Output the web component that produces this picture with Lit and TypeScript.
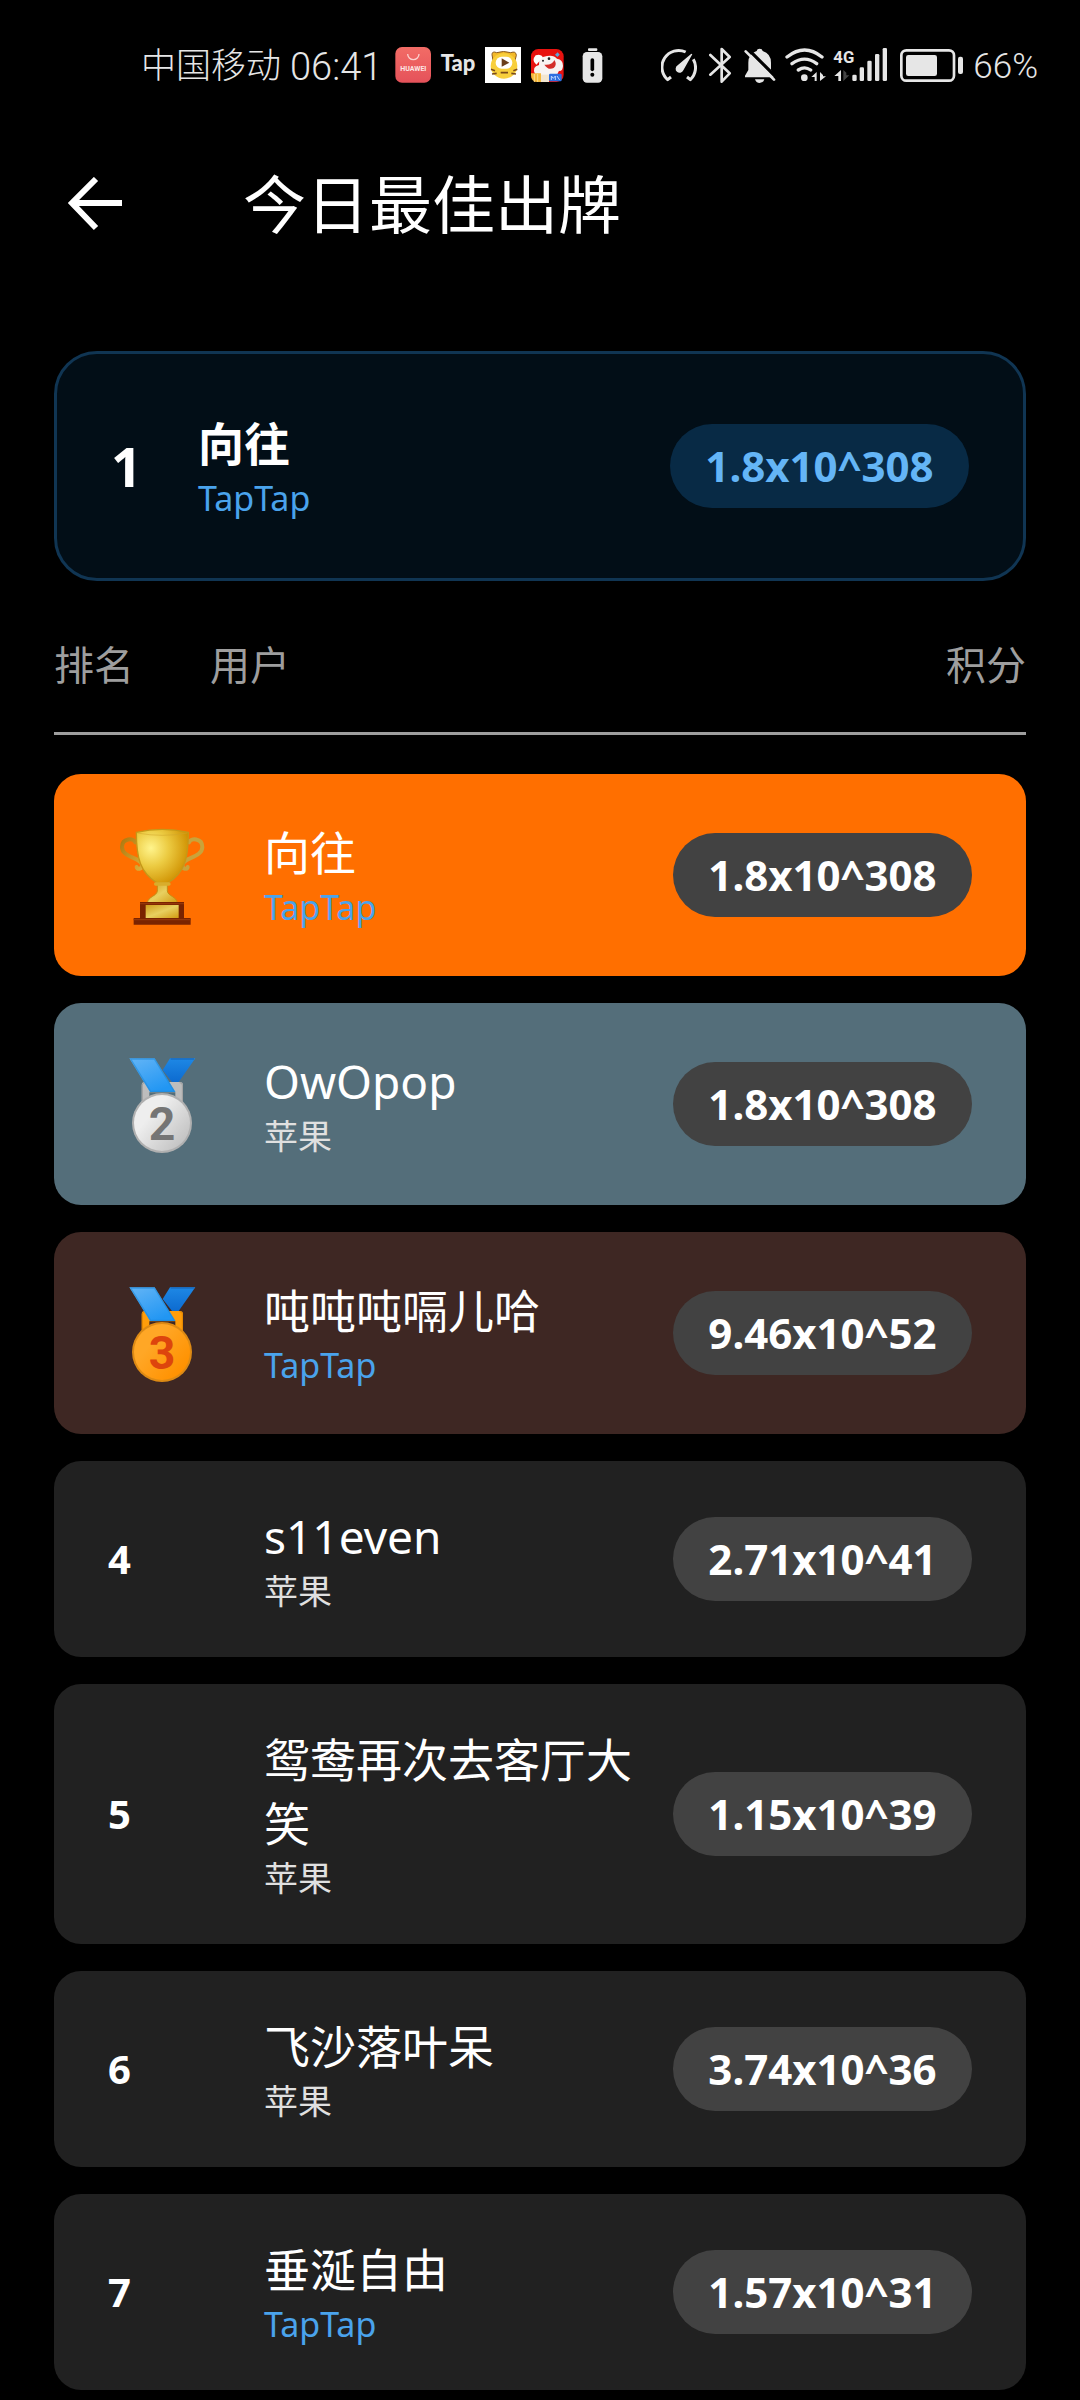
import { LitElement, html, svg, css } from "lit";
import { customElement, property } from "lit/decorators.js";

type Platform = "TapTap" | "苹果";

interface Entry {
  rank: number;
  name: string;
  platform: Platform;
  score: string;
}

const ENTRIES: Entry[] = [
  { rank: 1, name: "向往", platform: "TapTap", score: "1.8x10^308" },
  { rank: 2, name: "OwOpop", platform: "苹果", score: "1.8x10^308" },
  { rank: 3, name: "吨吨吨嗝儿哈", platform: "TapTap", score: "9.46x10^52" },
  { rank: 4, name: "s11even", platform: "苹果", score: "2.71x10^41" },
  { rank: 5, name: "鸳鸯再次去客厅大笑", platform: "苹果", score: "1.15x10^39" },
  { rank: 6, name: "飞沙落叶呆", platform: "苹果", score: "3.74x10^36" },
  { rank: 7, name: "垂涎自由", platform: "TapTap", score: "1.57x10^31" },
];

@customElement("status-bar")
class StatusBar extends LitElement {
  static styles = css`
    :host {
      display: flex;
      justify-content: space-between;
      align-items: center;
      height: 130px;
      padding: 0 42px 0 141px;
      color: #e6e6e6;
      font: 300 35px/48px "Roboto", "Noto Sans CJK SC", sans-serif;
      white-space: nowrap;
    }
    .group {
      display: flex;
      align-items: center;
      gap: 9px;
    }
    .tight {
      gap: 5px;
    }
    span {
      padding-top: 4px;
    }
    .time {
      font-size: 38px;
      min-width: 96px;
    }
    svg {
      display: block;
      height: 36px;
    }
  `;

  render() {
    return html`
      <div class="group">
        <span>中国移动</span>
        <span class="time">06:41</span>
        <svg width="36" viewBox="825 51 108 108" aria-hidden="true">
          <defs>
            <linearGradient id="store" x1="0" y1="0" x2="0" y2="1">
              <stop offset="0" stop-color="#f26c66" />
              <stop offset="1" stop-color="#e5525a" />
            </linearGradient>
          </defs>
          <rect x="826" y="51" width="107" height="107" rx="20" fill="url(#store)" />
          <path d="M863 72a17 17 0 0 0 34 0" fill="none" stroke="#fbd0cc" stroke-width="4" />
          <text x="880" y="122" text-anchor="middle" font-size="21" font-weight="700" fill="#fde6e4">HUAWEI</text>
        </svg>
        <svg width="36" viewBox="960 51 108 108" aria-hidden="true">
          <text x="1014" y="123" text-anchor="middle" font-family="Lato, sans-serif" font-size="66" font-weight="900" fill="#e6e6e6">Tap</text>
        </svg>
        <svg width="36" viewBox="1095 51 108 108" aria-hidden="true">
          <rect x="1095" y="51" width="108" height="108" fill="#fff" />
          <path d="M1116 74q0-12 14-6q20-7 42 0q16-6 17 8l-4 16h-66z" fill="#f3b928" stroke="#8a5a20" stroke-width="3" />
          <ellipse cx="1152" cy="108" rx="40" ry="38" fill="#f8cf3c" />
          <path d="M1113 118l12 4M1116 132l14-2M1192 118l-12 4M1188 132l-14-2M1142 128h22" stroke="#7a4a1a" stroke-width="5" />
          <rect x="1127" y="80" width="50" height="36" rx="18" fill="#fff" />
          <path d="M1145 85l23 13-23 12z" fill="#6b3f1c" />
        </svg>
        <svg width="36" viewBox="1233 51 108 108" aria-hidden="true">
          <rect x="1236" y="57" width="98" height="99" rx="22" fill="#e8120f" />
          <path d="M1248 132q-10-22 12-27q-4-24 24-27q20-4 30 8q18 2 18 22q-2 18-12 14q-6 20-30 20q-14 8-42-10z" fill="#f8f4f2" />
          <path d="M1252 104q-16-12-2-28q16-6 22 6z" fill="#fff" />
          <path d="M1276 104q24 2 30-14q10 14-2 24q-16 8-28-10z" fill="#d32f2a" />
          <circle cx="1290" cy="86" r="4" fill="#222" />
          <circle cx="1272" cy="92" r="3" fill="#222" />
          <path d="M1308 74l8-7 6 7-7 7z" fill="#5da5d8" />
          <path d="M1236 130h30v26h-10q-20 0-20-22z" fill="#f6b93b" />
          <path d="M1266 134h24v22h-24z" fill="#f3e6cf" />
          <path d="M1246 132v24M1256 132v24" stroke="#fbdc8c" stroke-width="3" />
          <rect x="1290" y="131" width="38" height="23" rx="4" fill="#2f6fe0" />
          <path d="M1297 150v-12l6 7 6-7v12M1314 138l8 12" stroke="#bcd7ff" stroke-width="3" fill="none" />
        </svg>
        <svg width="36" viewBox="1368 51 108 108" aria-hidden="true">
          <rect x="1407" y="55" width="28" height="8" rx="3" fill="#e6e6e6" />
          <rect x="1391" y="66" width="59" height="92" rx="13" fill="#e6e6e6" />
          <path d="M1420 90v28" stroke="#000" stroke-width="11" stroke-linecap="round" />
          <circle cx="1420" cy="134" r="6" />
        </svg>
      </div>
      <div class="group tight">
        <svg width="36" viewBox="60 51 108 108" fill="none" stroke="#e6e6e6" stroke-width="9" aria-hidden="true">
          <path d="M90 141l-10 8A50 50 0 0 1 134 66" stroke-linejoin="round" />
          <path d="M157 88A50 50 0 0 1 148 149l-10-8" stroke-linejoin="round" />
          <path d="M151 71l3 2-27 48a12 12 0 1 1-17-15z" fill="#e6e6e6" stroke="none" />
        </svg>
        <svg width="36" viewBox="183 51 108 108" fill="none" stroke="#e6e6e6" stroke-width="8" stroke-linecap="round" stroke-linejoin="round" aria-hidden="true">
          <path d="M208 75l58 55-24 25V57l24 24-58 53" />
        </svg>
        <svg width="36" viewBox="306 51 108 108" aria-hidden="true">
          <path d="M347 63q1-7 9-7q8 0 9 7q25 8 25 35v22l10 17v5h-88v-5l10-17V98q0-27 25-35z" fill="#e6e6e6" />
          <path d="M342 148h28q-3 11-14 11t-14-11z" fill="#e6e6e6" />
          <path d="M322 58l86 86" stroke="#000" stroke-width="10" />
          <path d="M314 64l85 85" stroke="#e6e6e6" stroke-width="8" stroke-linecap="round" />
        </svg>
        <svg width="43" viewBox="429 51 129 108" fill="none" stroke="#e6e6e6" stroke-width="10" stroke-linecap="round" aria-hidden="true">
          <path d="M438 81q53-42 105 0M453 101q38-27 74 0M472 120q19-13 37 0" />
          <circle cx="490" cy="143" r="10" fill="#e6e6e6" stroke="none" />
          <path d="M511 141l16-15v27h-6v-12zM555 139h-9v-4l-9-9v27z" fill="#e6e6e6" stroke="none" />
        </svg>
        <svg width="58" viewBox="573 51 174 108" fill="#e6e6e6" aria-hidden="true">
          <text x="577" y="98" font-size="50" font-weight="700">4G</text>
          <path d="M580 138l20-18v33h-8v-15z" />
          <path d="M607 120v33l18-17h-9v-8z" fill="#444" />
          <rect x="634" y="134" width="13" height="19" rx="4" />
          <rect x="656" y="112" width="13" height="41" rx="4" />
          <rect x="679" y="92" width="13" height="61" rx="4" />
          <rect x="702" y="72" width="13" height="81" rx="4" />
          <rect x="725" y="54" width="13" height="99" rx="4" />
        </svg>
        <svg width="73" viewBox="762 51 219 108" fill="#e6e6e6" aria-hidden="true">
          <rect x="781" y="61" width="158" height="91" rx="15" fill="none" stroke="#e6e6e6" stroke-width="8" />
          <rect x="795" y="75" width="93" height="63" rx="7" />
          <rect x="951" y="80" width="15" height="52" rx="6" />
        </svg>
        <span>66%</span>
      </div>
    `;
  }
}

@customElement("rank-award")
class RankAward extends LitElement {
  @property({ type: Number }) rank = 1;

  static styles = css`
    :host {
      display: block;
      width: 108px;
    }
    svg {
      display: block;
      width: 108px;
      height: 116px;
    }
    text {
      font: 700 139px "Roboto", sans-serif;
    }
  `;

  private trophy() {
    return svg`
      <defs>
        <radialGradient id="cup" cx="0.28" cy="0.35" r="0.75">
          <stop offset="0" stop-color="#fff48c" />
          <stop offset="0.45" stop-color="#eccb42" />
          <stop offset="1" stop-color="#cf9000" />
        </radialGradient>
        <linearGradient id="arm" x1="0" y1="0" x2="1" y2="1">
          <stop offset="0" stop-color="#b07a10" />
          <stop offset="1" stop-color="#dcae38" />
        </linearGradient>
        <linearGradient id="plate" x1="0" y1="0" x2="1" y2="1">
          <stop offset="0" stop-color="#cf9d1a" />
          <stop offset="0.5" stop-color="#e8d060" />
          <stop offset="1" stop-color="#d29a10" />
        </linearGradient>
      </defs>
      <path d="M286 664c-4-14-40-14-40 14c0 32 58 32 60 54c0 14-14 14-16 6" fill="none" stroke="url(#arm)" stroke-width="12" stroke-linecap="round" />
      <path d="M447 664c4-14 40-14 40 14c0 32-58 32-60 54c0 14 14 14 16 6" fill="none" stroke="#c9a33a" stroke-width="12" stroke-linecap="round" />
      <path d="M352 784h30v26c2 16 28 16 30 36h-90c2-20 28-20 30-36z" fill="url(#plate)" stroke="#c58f14" stroke-width="3" />
      <path d="M289 634q78-18 156 0c0 78-10 120-62 152h-32c-50-32-62-74-62-152z" fill="url(#cup)" stroke="#c59818" stroke-width="4" />
      <path d="M292 636q75 14 150 0" fill="none" stroke="#cfa32a" stroke-width="3" opacity="0.5" />
      <rect x="342" y="784" width="50" height="10" rx="5" fill="#d9ad2c" />
      <path d="M300 843h132v48h20v20H281v-20h19z" fill="#7a2300" />
      <path d="M281 894h171v4H281zM300 846h132v4H300z" fill="#94360a" />
      <rect x="317" y="852" width="99" height="39" fill="url(#plate)" />
    `;
  }

  private medal() {
    const silver = this.rank === 2;
    return svg`
      <defs>
        <linearGradient id="band" x1="0" y1="0" x2="0.6" y2="1">
          <stop offset="0" stop-color="#64b5f6" />
          <stop offset="1" stop-color="#2196f3" />
        </linearGradient>
        <linearGradient id="back" x1="0" y1="0" x2="0" y2="1">
          <stop offset="0" stop-color="#1e88e5" />
          <stop offset="1" stop-color="#0d6bd0" />
        </linearGradient>
        <linearGradient id="disc" x1="0.1" y1="0.1" x2="0.9" y2="0.8">
          <stop offset="0.3" stop-color=${silver ? "#eeeeee" : "#ffa726"} />
          <stop offset="1" stop-color=${silver ? "#c4c4c4" : "#ff9100"} />
        </linearGradient>
      </defs>
      <path d="M305 340v-58q0-9 9-9h106q9 0 9 9v58h-23v-36h-78v36z" fill=${silver ? "#bdbdbd" : "#ff9d0a"} />
      <path d="M307 336v-54q0-7 8-7M427 336v-54q0-7-8-7" fill="none" stroke=${silver ? "#9e9e9e" : "#e08600"} stroke-width="3" />
      <path d="M390 202h76l-50 71h-20l-28-36z" fill="url(#back)" />
      <path d="M392 204h70" stroke="#1769c0" stroke-width="4" />
      <path d="M268 202h76l62 101h-76z" fill="url(#band)" />
      <path d="M272 204h71l60 97h-71z" fill="none" stroke="#1e88d8" stroke-width="4" opacity="0.6" />
      <circle cx="366" cy="396" r="90" fill=${silver ? "#b0b0b0" : "#dd8a14"} />
      <circle cx="366" cy="396" r="84" fill="url(#disc)" />
      <text x="366" y="446" text-anchor="middle" fill=${silver ? "#757575" : "#dd450d"}>${this.rank}</text>
    `;
  }

  render() {
    return this.rank === 1
      ? html`<svg viewBox="204 588 324 348" role="img" aria-label="1">${this.trophy()}</svg>`
      : html`<svg viewBox="204 165 324 348" role="img">${this.medal()}</svg>`;
  }
}

@customElement("app-root")
class AppRoot extends LitElement {
  static styles = css`
    :host {
      display: block;
      box-sizing: border-box;
      min-height: 100vh;
      background: #000;
      color: #fff;
      font-family: "Noto Sans", "Noto Sans CJK SC", sans-serif;
    }
    .app-bar {
      display: flex;
      align-items: center;
      gap: 108px;
      height: 148px;
      padding: 0 54px;
    }
    .back {
      display: flex;
      align-items: center;
      justify-content: center;
      width: 81px;
      height: 81px;
      padding: 0;
      border: 0;
      background: none;
      color: #fff;
    }
    h1 {
      margin: 0;
      font-size: 63px;
      line-height: 84px;
      font-weight: 400;
    }
    main {
      padding: 73px 54px 8px;
    }
    .mine {
      display: grid;
      grid-template-columns: 87px 1fr auto;
      align-items: center;
      padding: 57px 54px;
      border: 3px solid #103553;
      border-radius: 43px;
      background: #020e17;
    }
    .mine .rank {
      font-size: 54px;
    }
    .mine .name {
      font-weight: 700;
    }
    .mine .score {
      background: #082a45;
      color: #64b5f6;
    }
    table,
    thead,
    tbody {
      display: block;
    }
    tr {
      display: grid;
      grid-template-columns: 156px 1fr auto;
      align-items: center;
    }
    th,
    td {
      display: block;
      padding: 0;
      text-align: left;
    }
    thead tr {
      padding: 60px 0 43px;
      border-bottom: 3px solid #9e9e9e;
    }
    th {
      color: #9e9e9e;
      font-size: 40px;
      line-height: 48px;
      font-weight: 400;
    }
    tbody {
      display: flex;
      flex-direction: column;
      gap: 27px;
      padding-top: 39px;
    }
    tbody tr {
      padding: 43px 54px;
      border-radius: 27px;
      background: #212121;
    }
    tbody .first {
      background: #ff6f00;
    }
    tbody .second {
      background: #546e7a;
    }
    tbody .third {
      background: #3e2723;
    }
    .rank {
      font-size: 40px;
      line-height: 64px;
      font-weight: 700;
    }
    .name {
      font-size: 46px;
      line-height: 64px;
    }
    .platform {
      color: #e0e0e0;
      font-size: 34px;
      line-height: 46px;
    }
    .taptap {
      color: #4aa3ec;
    }
    .score {
      box-sizing: border-box;
      min-width: 299px;
      padding: 14px 32px;
      border-radius: 43px;
      background: #424242;
      font-size: 42px;
      line-height: 56px;
      font-weight: 700;
      text-align: center;
    }
  `;

  private user(entry: Entry) {
    return html`
      <div class="name">${entry.name}</div>
      <div class="platform ${entry.platform === "TapTap" ? "taptap" : ""}">${entry.platform}</div>
    `;
  }

  private row(entry: Entry) {
    const place = ["first", "second", "third"][entry.rank - 1] ?? "";
    return html`
      <tr class=${place}>
        <td class="rank">${place ? html`<rank-award .rank=${entry.rank}></rank-award>` : entry.rank}</td>
        <td>${this.user(entry)}</td>
        <td><div class="score">${entry.score}</div></td>
      </tr>
    `;
  }

  render() {
    const mine = ENTRIES[0];
    return html`
      <status-bar></status-bar>
      <header class="app-bar">
        <button class="back" type="button" aria-label="返回">
          <svg width="56" height="54" viewBox="0 0 56 54" fill="none" stroke="currentColor" stroke-width="6" aria-hidden="true">
            <path d="M29 2L5 26l24 25M5 26h50" />
          </svg>
        </button>
        <h1>今日最佳出牌</h1>
      </header>
      <main>
        <section class="mine">
          <div class="rank">${mine.rank}</div>
          <div>${this.user(mine)}</div>
          <div class="score">${mine.score}</div>
        </section>
        <table>
          <thead>
            <tr>
              <th scope="col">排名</th>
              <th scope="col">用户</th>
              <th scope="col">积分</th>
            </tr>
          </thead>
          <tbody>
            ${ENTRIES.map((entry) => this.row(entry))}
          </tbody>
        </table>
      </main>
    `;
  }
}
